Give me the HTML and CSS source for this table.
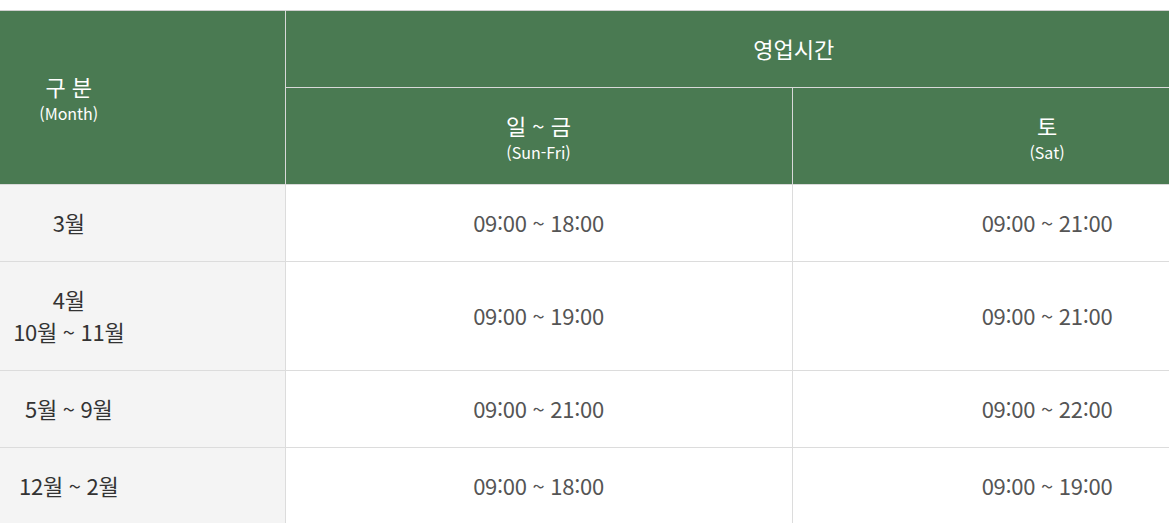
FILE: index.html
```html
<!DOCTYPE html>
<html lang="ko">
<head>
<meta charset="utf-8">
<title>영업시간</title>
<link rel="stylesheet" href="styles.css">
</head>
<body>
<div class="wrap">
  <table class="hours">
    <colgroup>
      <col class="c1">
      <col class="c2">
      <col class="c3">
    </colgroup>
    <thead>
      <tr>
        <th rowspan="2" class="th-month"><span class="main">구 분</span><span class="sub">(Month)</span></th>
        <th colspan="2" class="th-top">영업시간</th>
      </tr>
      <tr>
        <th class="th-day"><span class="main">일 ~ 금</span><span class="sub">(Sun-Fri)</span></th>
        <th class="th-day"><span class="main">토</span><span class="sub">(Sat)</span></th>
      </tr>
    </thead>
    <tbody>
      <tr>
        <td class="month">3월</td>
        <td>09:00 ~ 18:00</td>
        <td>09:00 ~ 21:00</td>
      </tr>
      <tr>
        <td class="month">4월<br>10월 ~ 11월</td>
        <td>09:00 ~ 19:00</td>
        <td>09:00 ~ 21:00</td>
      </tr>
      <tr>
        <td class="month">5월 ~ 9월</td>
        <td>09:00 ~ 21:00</td>
        <td>09:00 ~ 22:00</td>
      </tr>
      <tr>
        <td class="month">12월 ~ 2월</td>
        <td>09:00 ~ 18:00</td>
        <td>09:00 ~ 19:00</td>
      </tr>
    </tbody>
  </table>
</div>
</body>
</html>
```
FILE: styles.css
```css
html, body {
  margin: 0;
  padding: 0;
  background: #fff;
  overflow: hidden;
}
body {
  font-family: "Noto Sans CJK KR", "Noto Sans", sans-serif;
}
.wrap {
  padding-top: 10px;
  overflow: hidden;
}
.hours {
  margin-left: -147px;
  width: 1449px;
  table-layout: fixed;
  border-collapse: collapse;
  border-top: 1px solid #cfcfcf;
}
.c1 { width: 432px; }
.c2 { width: 507px; }
.c3 { width: 510px; }

.hours th {
  background: #4a7a52;
  color: #fff;
  font-weight: 400;
  text-align: center;
  vertical-align: middle;
  border: 1px solid #d9d9d9;
  border-top: 0;
  border-left: 0;
  padding: 0 0 2px;
}
.hours th .main {
  display: block;
  font-size: 22px;
  line-height: 34px;
}
.hours th .sub {
  display: block;
  font-size: 16px;
  line-height: 20px;
}
.th-month {
  padding-bottom: 4px !important;
}
.th-top {
  height: 74px;
  font-size: 22px;
  line-height: 34px;
  border-right: 0 !important;
}
.th-day {
  height: 94px;
}
.hours td {
  text-align: center;
  vertical-align: middle;
  font-size: 22px;
  line-height: 32px;
  letter-spacing: -0.3px;
  color: #555;
  padding: 21px 0 23px;
  border-bottom: 1px solid #dcdcdc;
  border-right: 1px solid #dcdcdc;
}
.hours td.month {
  background: #f4f4f4;
  color: #333;
}
```
